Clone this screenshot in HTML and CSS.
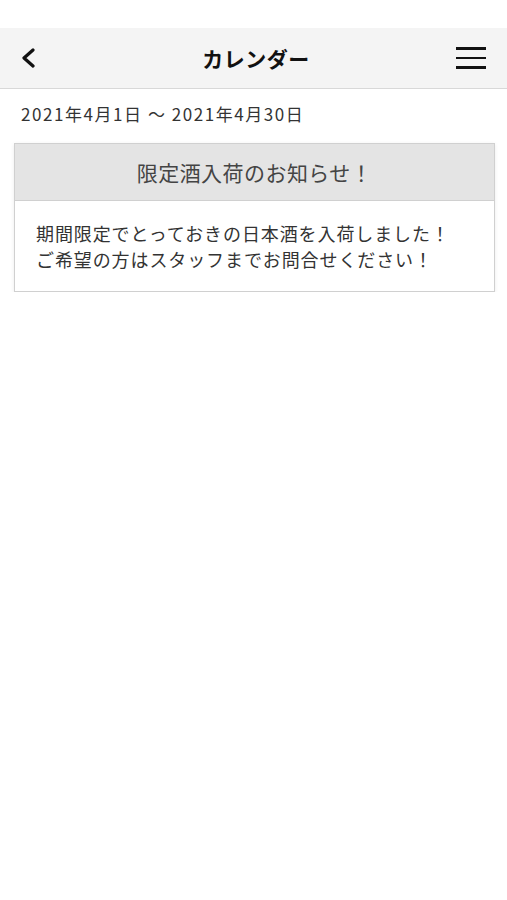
FILE: index.html
```html
<!DOCTYPE html>
<html lang="ja">
<head>
  <meta charset="UTF-8">
  <title>カレンダー</title>
  <link rel="stylesheet" href="styles.css">
</head>
<body>

  <header class="cabecalho">
    <button class="btn-voltar" aria-label="戻る">
      <svg width="18" height="20" viewBox="0 0 18 20">
        <path d="M13 2 L4 10 L13 18" fill="none" stroke="#111" stroke-width="3.2" stroke-linecap="round" stroke-linejoin="round"/>
      </svg>
    </button>
    <h1>カレンダー</h1>
    <button class="btn-menu" aria-label="メニュー">
      <span></span>
      <span></span>
      <span></span>
    </button>
  </header>

  <p class="periodo">2021年4月1日 〜 2021年4月30日</p>

  <section class="aviso">
    <h2>限定酒入荷のお知らせ！</h2>
    <p>期間限定でとっておきの日本酒を入荷しました！<br>ご希望の方はスタッフまでお問合せください！</p>
  </section>

</body>
</html>
```

FILE: styles.css
```css
body {
  margin: 0;
  padding-top: 28px;
  background-color: #fff;
  font-family: "Noto Sans CJK JP", "Noto Sans", sans-serif;
  color: #333;
}

.cabecalho {
  height: 60px;
  display: flex;
  align-items: center;
  justify-content: space-between;
  padding: 0 20px 0 20px;
  background-color: #f4f4f4;
  border-bottom: 1px solid #d8d8d8;
}

.cabecalho h1 {
  margin: 0;
  font-size: 21px;
  font-weight: bold;
  color: #111;
  letter-spacing: 0.5px;
}

.btn-voltar,
.btn-menu {
  background: none;
  border: none;
  padding: 0;
  cursor: pointer;
}

.btn-voltar {
  width: 36px;
  display: flex;
  align-items: center;
}

.btn-menu {
  width: 30px;
  display: flex;
  flex-direction: column;
  gap: 7px;
  margin-right: 1px;
}

.btn-menu span {
  display: block;
  height: 2.5px;
  background-color: #111;
}

.periodo {
  margin: 12px 0 0 21px;
  font-size: 17px;
  line-height: 26px;
  letter-spacing: 1.55px;
  color: #333;
}

.aviso {
  margin: 16px 12px 0 14px;
  background-color: #fff;
  border: 1px solid #d0d0d0;
  box-shadow: 0 1px 4px rgba(0, 0, 0, 0.08);
}

.aviso h2 {
  margin: 0;
  height: 56px;
  display: flex;
  align-items: center;
  justify-content: center;
  background-color: #e4e4e4;
  border-bottom: 1px solid #d0d0d0;
  font-size: 21px;
  font-weight: normal;
  letter-spacing: 0.45px;
  color: #444;
}

.aviso p {
  margin: 0;
  padding: 19px 20px 19px 21px;
  font-size: 18px;
  line-height: 26px;
  letter-spacing: 0.9px;
  color: #333;
}
```
